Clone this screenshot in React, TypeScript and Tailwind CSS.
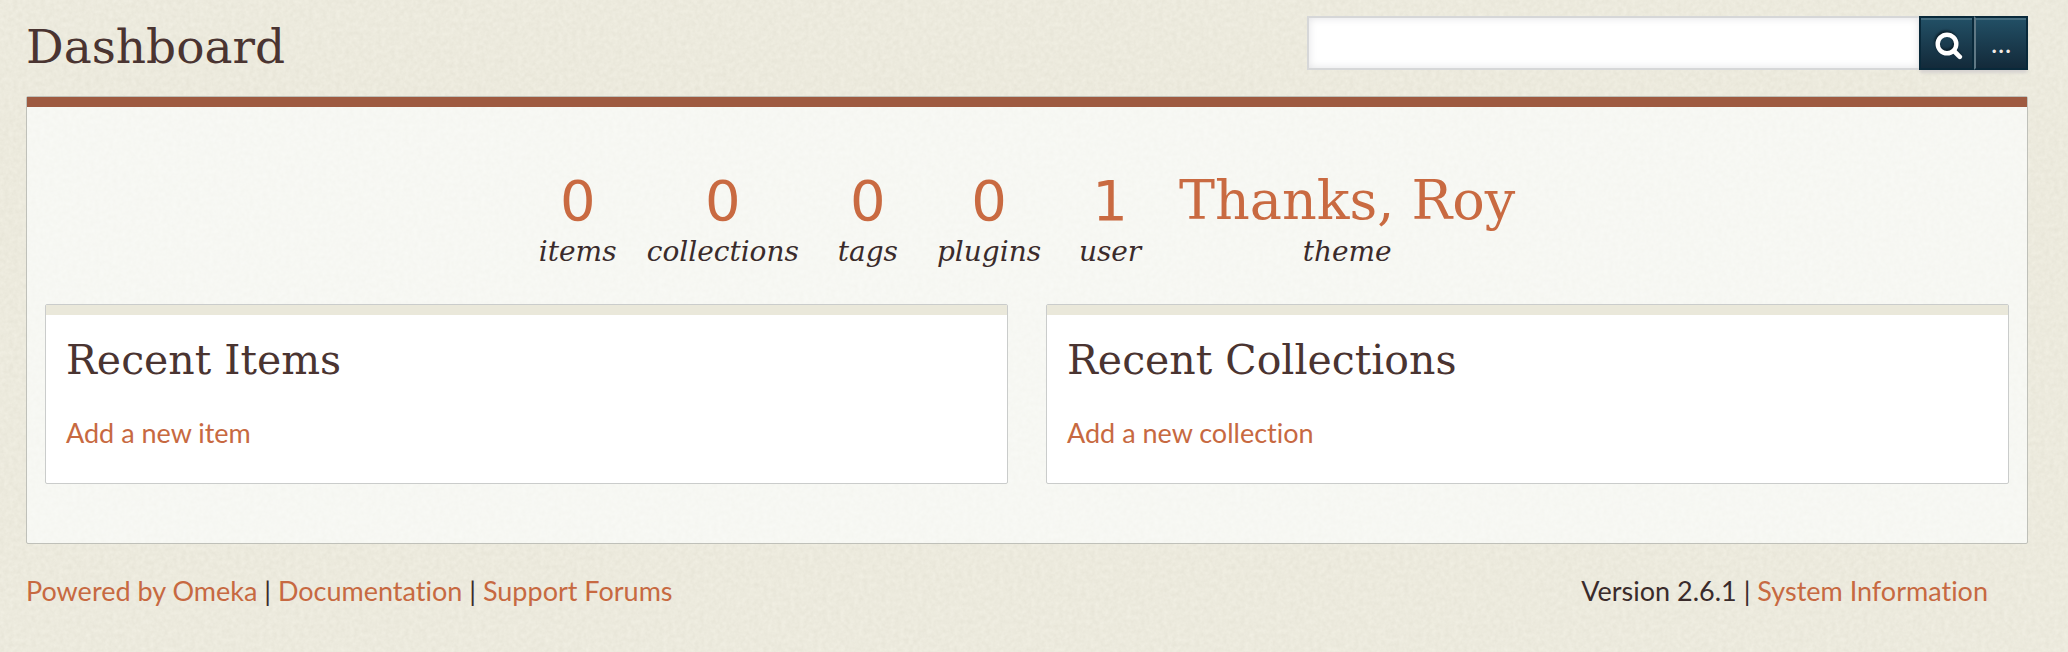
import React from "react";

const slab = "font-['DejaVu_Serif',serif]";
const link = "text-[#c76941] hover:underline";

type Stat = { value: string; label: string; numeric: boolean };

const stats: Stat[] = [
  { value: "0", label: "items", numeric: true },
  { value: "0", label: "collections", numeric: true },
  { value: "0", label: "tags", numeric: true },
  { value: "0", label: "plugins", numeric: true },
  { value: "1", label: "user", numeric: true },
  { value: "Thanks, Roy", label: "theme", numeric: false },
];

// Paper grain drawn behind the content of its positioned parent.
function Grain({ id, strength }: { id: string; strength: string }) {
  return (
    <svg aria-hidden="true" className="pointer-events-none absolute inset-0 -z-10 h-full w-full">
      <filter id={id} x="0" y="0" width="100%" height="100%">
        <feTurbulence type="fractalNoise" baseFrequency="0.22" numOctaves="3" seed="4" stitchTiles="stitch" />
        <feColorMatrix values={`0 0 0 0 0.45  0 0 0 0 0.43  0 0 0 0 0.33  ${strength} 0 0 0 0`} />
      </filter>
      <rect width="100%" height="100%" filter={`url(#${id})`} />
    </svg>
  );
}

function Panel({ title, action }: { title: string; action: string }) {
  return (
    <section className="rounded-xs border border-[#cacccb] bg-white">
      <div className="h-[10px] bg-[#eae8da]" />
      <div className="px-5 pt-5 pb-8">
        <h2 className={`${slab} text-[41px] leading-[50px] text-[#4a3431]`}>{title}</h2>
        <p className="mt-[30px] text-[27px] leading-9">
          <a href="#" className={link}>{action}</a>
        </p>
      </div>
    </section>
  );
}

export default function App() {
  return (
    <div className="relative isolate min-h-screen bg-[#f2f0e4] pr-10 pl-[26px] font-[Lato,sans-serif] text-[#3a2b2b] [font-variant-ligatures:none]">
      <Grain id="page-grain" strength="0.19" />
      <header className="flex h-24 items-start justify-between pt-4">
        <h1 className={`${slab} text-[47px] leading-[62px] text-[#4a3431]`}>Dashboard</h1>
        <form role="search" className="flex h-[54px] w-[36%]" onSubmit={(e) => e.preventDefault()}>
          <input
            type="search"
            aria-label="Search"
            className="min-w-0 flex-1 border-2 border-r-0 border-[#d6d7d8] bg-white px-3 text-[27px] shadow-[inset_0_0_9px_#e2e2e4] outline-none"
          />
          <div className="flex shadow-[0_4px_3px_-1px_#d6d2d0]">
            <button
              type="submit"
              aria-label="Search"
              className="flex w-[55px] items-center justify-center border-2 border-[#09293a] bg-linear-to-b from-[#225066] to-[#132a3a] pl-1 shadow-[inset_0_2px_0_#456c7e]"
            >
              <svg viewBox="0 0 28 28" className="mt-1.5 h-7 w-7 drop-shadow-[-1px_-2px_1px_#0a1f2b]" fill="none" stroke="white" strokeLinecap="round">
                <circle cx="12" cy="12" r="9.3" strokeWidth="4.4" />
                <path d="M19 19l5.8 5.8" strokeWidth="4.6" />
              </svg>
            </button>
            <button
              type="button"
              aria-label="Advanced search"
              className="flex w-[54px] items-center justify-center border-2 border-l-[#5f7885] border-[#09293a] bg-linear-to-b from-[#225066] to-[#132a3a] text-[27px] text-[#f4ece6] shadow-[inset_0_2px_0_#456c7e]"
            >
              …
            </button>
          </div>
        </form>
      </header>

      <main className="relative isolate rounded-xs border border-[#bfc0b9] bg-[#f9faf6] px-[18px] pb-[59px]">
        <Grain id="panel-grain" strength="0.07" />
        <div className="-mx-[18px] h-[10px] bg-[#9e5a40]" />
        <ul className="flex justify-center gap-[30px] pt-[60px] pb-[35px]">
          {stats.map(({ value, label, numeric }) => (
            <li key={label} className="min-w-[78px] text-center">
              <a
                href="#"
                className={`block leading-[68px] text-[#c96a41] ${
                  numeric ? "font-['DejaVu_Sans',sans-serif] text-[56px]" : `${slab} text-[54px]`
                }`}
              >
                {value}
              </a>
              <span className={`${slab} block text-[28px] leading-[34px] italic`}>{label}</span>
            </li>
          ))}
        </ul>
        <div className="grid grid-cols-2 gap-[38px]">
          <Panel title="Recent Items" action="Add a new item" />
          <Panel title="Recent Collections" action="Add a new collection" />
        </div>
      </main>

      <footer className="flex justify-between pt-7 pr-10 text-[27px] leading-[38px]">
        <p>
          <a href="#" className={link}>Powered by Omeka</a> | <a href="#" className={link}>Documentation</a> |{" "}
          <a href="#" className={link}>Support Forums</a>
        </p>
        <p>
          Version 2.6.1 | <a href="#" className={link}>System Information</a>
        </p>
      </footer>
    </div>
  );
}
